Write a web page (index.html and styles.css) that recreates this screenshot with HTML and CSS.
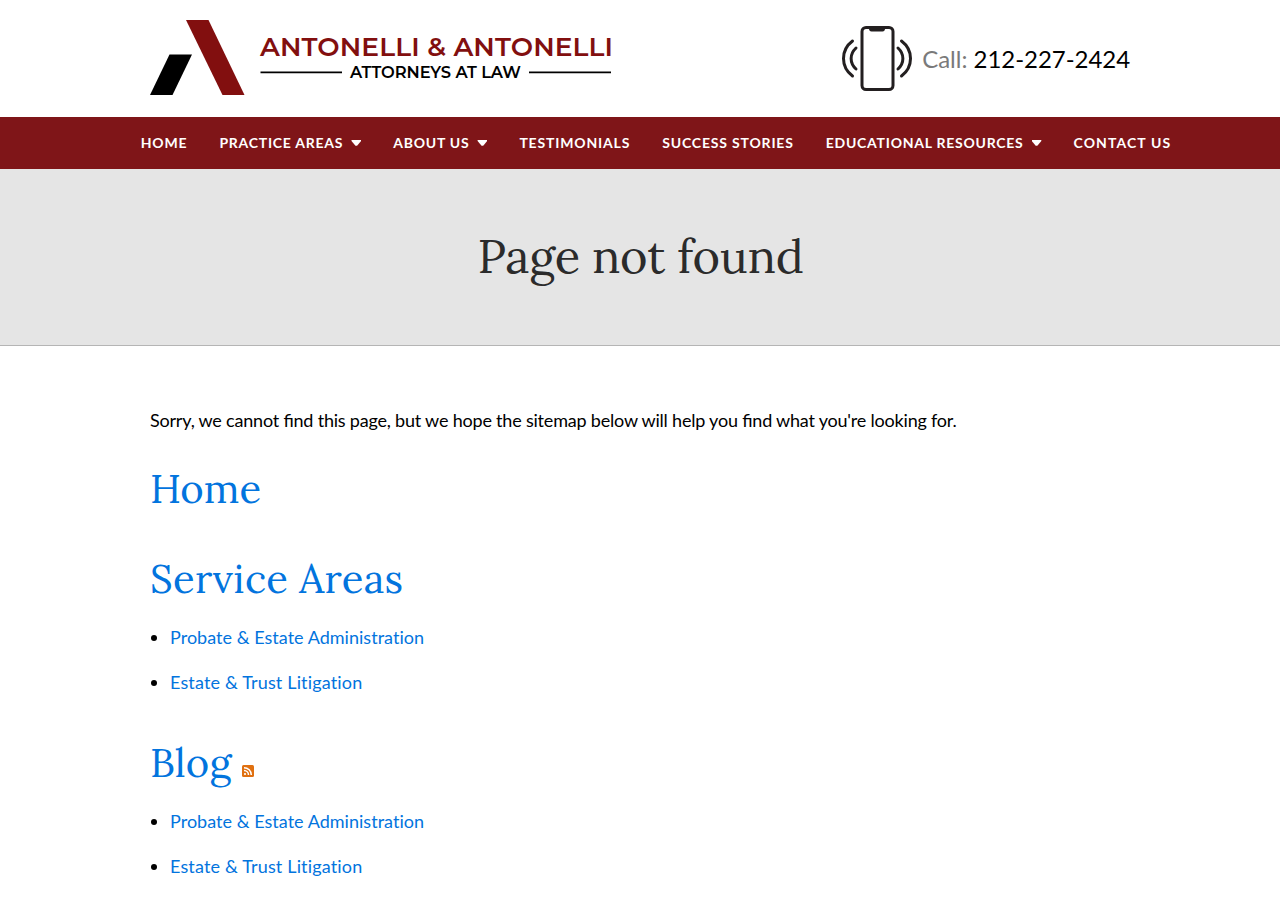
FILE: index.html
```html
<!DOCTYPE html>
<html lang="en">
<head>
  <meta charset="UTF-8" />
  <meta name="viewport" content="width=device-width, initial-scale=1.0"/>
  <title>Page not found | Antonelli &amp; Antonelli</title>
  <link rel="stylesheet" href="styles.css">
</head>
<body>
  <header class="header container">
    <a href="#" class="logo">
      <svg width="462" height="76" viewBox="0 0 462 76">
        <path fill="#000" d="M19.5 34.5H42L22.5 75H0z"/>
        <path fill="#820f0f" d="M36 0H58.5L94.500 75H72.500z"/>
        <text class="logo-name" x="110" y="35.500" textLength="353" lengthAdjust="spacing">ANTONELLI &amp; ANTONELLI</text>
        <path stroke="#000" stroke-width="1.800" d="M110.500 52.400H192M379 52.400H461"/>
        <text class="logo-tag" x="200" y="58" textLength="171" lengthAdjust="spacing">ATTORNEYS AT LAW</text>
      </svg>
    </a>
    <div class="phone">
      <svg width="70" height="66" viewBox="0 0 70 66" fill="none" stroke="#231f20" stroke-width="3" stroke-linecap="round">
        <rect x="20" y="2.500" width="31" height="62" rx="4"/>
        <path fill="#231f20" stroke="none" d="M26.500 2h17q-.5 4.500-3 4.500h-11q-2.500 0-3-4.500z"/>
        <path d="M10.500 16C-1.500 25-1.500 42 10.500 51M14 23C7.500 29 7.500 38 14 44M59.500 16C71.500 25 71.500 42 59.500 51M56 23C62.500 29 62.500 38 56 44"/>
      </svg>
      <p>Call: <a href="#">212-227-2424</a></p>
    </div>
  </header>

  <nav class="nav">
    <a href="#">Home</a>
    <a href="#" class="dropdown">Practice Areas</a>
    <a href="#" class="dropdown">About Us</a>
    <a href="#">Testimonials</a>
    <a href="#">Success Stories</a>
    <a href="#" class="dropdown">Educational Resources</a>
    <a href="#">Contact Us</a>
  </nav>

  <div class="banner">
    <h1>Page not found</h1>
  </div>

  <main class="content container">
    <p>Sorry, we cannot find this page, but we hope the sitemap below will help you find what you're looking for.</p>

    <h2 class="home"><a href="#">Home</a></h2>

    <h2 class="areas"><a href="#">Service Areas</a></h2>
    <ul>
      <li><a href="#">Probate &amp; Estate Administration</a></li>
      <li><a href="#">Estate &amp; Trust Litigation</a></li>
    </ul>

    <h2 class="blog">
      <a href="#">Blog</a>
      <a href="#" class="rss" aria-label="RSS feed">
        <svg width="12" height="12" viewBox="0 0 12 12">
          <rect width="12" height="12" rx="1.500" fill="#e07010"/>
          <g fill="none" stroke="#fff" stroke-width="1.500">
            <path d="M2 5.500A4.500 4.500 0 0 1 6.500 10M2 2.700A7.300 7.300 0 0 1 9.300 10"/>
          </g>
          <circle cx="3" cy="9" r="1.100" fill="#fff"/>
        </svg>
      </a>
    </h2>
    <ul>
      <li><a href="#">Probate &amp; Estate Administration</a></li>
      <li><a href="#">Estate &amp; Trust Litigation</a></li>
    </ul>
  </main>
</body>
</html>
```
FILE: styles.css
```css
body { font-family: Lato, sans-serif; font-size: 18px; line-height: 27px; margin: 0; color: #000; background: #fff; overflow: hidden; }
a { color: #0274de; text-decoration: none; }
.container { width: 980px; margin: 0 auto; }

.header { display: flex; justify-content: space-between; height: 97px; padding-top: 20px; }
.logo svg { display: block; overflow: visible; }
.logo-name { font-family: Montserrat, Lato, sans-serif; font-size: 26.5px; font-weight: 600; fill: #820f0f; }
.logo-tag { font-family: Montserrat, Lato, sans-serif; font-size: 16.3px; font-weight: 600; fill: #000; }
.phone { display: flex; gap: 10px; padding-top: 5px; }
.phone p { margin: 16px 0 0; font-size: 24px; line-height: 36px; color: #7a7a7a; }
.phone a { color: #000; letter-spacing: -0.05px; }

.nav { display: flex; justify-content: center; background: #7f1518; height: 52px; padding-left: 32px; }
.nav a { color: #fff; font-size: 14px; font-weight: 700; line-height: 52px; letter-spacing: 0.83px; text-transform: uppercase; padding: 0 16px; white-space: nowrap; }
.nav .dropdown { display: flex; align-items: center; letter-spacing: 0.75px; }
.nav a:last-child { letter-spacing: 1.1px; }
.nav .dropdown::after { content: ""; width: 10px; height: 6px; margin-left: 8px; background: #fff; clip-path: polygon(5% 0, 95% 0, 100% 12%, 58% 95%, 42% 95%, 0 12%); }

.banner { background: #e5e5e5; border-bottom: 1px solid #b5b5b5; height: 176px; text-align: center; }
h1, h2 { font-family: Lora, "Liberation Serif", serif; font-weight: 400; margin: 0; }
h1 { color: #2b2b2b; font-size: 47px; line-height: 58px; letter-spacing: -0.3px; padding: 58px 0 0 1px; }

.content { padding-top: 61px; }
.content p { margin: 0 0 30px; letter-spacing: -0.2px; font-feature-settings: "liga" 1; }
h2 { font-size: 40px; line-height: 50px; letter-spacing: 0.2px; }
.home { margin-bottom: 40px; letter-spacing: 0; }
.areas { letter-spacing: 0.3px; }
ul { margin: 20px 0 42px; padding-left: 20px; }
li { margin-bottom: 18px; font-variant-ligatures: none; letter-spacing: 0.03px; }
li:last-child { margin-bottom: 0; letter-spacing: 0.16px; }
.rss svg { vertical-align: baseline; }
```
